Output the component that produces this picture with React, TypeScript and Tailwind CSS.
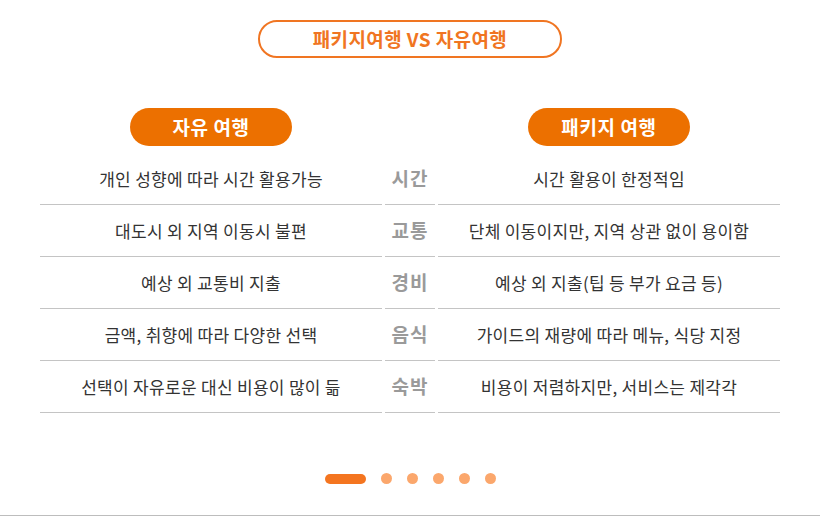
const rows = [
  { label: "시간", free: "개인 성향에 따라 시간 활용가능", pkg: "시간 활용이 한정적임" },
  { label: "교통", free: "대도시 외 지역 이동시 불편", pkg: "단체 이동이지만, 지역 상관 없이 용이함" },
  { label: "경비", free: "예상 외 교통비 지출", pkg: "예상 외 지출(팁 등 부가 요금 등)" },
  { label: "음식", free: "금액, 취향에 따라 다양한 선택", pkg: "가이드의 재량에 따라 메뉴, 식당 지정" },
  { label: "숙박", free: "선택이 자유로운 대신 비용이 많이 듦", pkg: "비용이 저렴하지만, 서비스는 제각각" },
];

export default function App() {
  return (
    <div
      className="w-[820px] h-[516px] bg-white flex flex-col items-center border-b border-[#bdbdbd]"
      style={{ fontFamily: '"Noto Sans CJK KR", "Noto Sans", sans-serif' }}
    >
      <div className="mt-[20px] w-[304px] h-[38px] rounded-full border-2 border-[#f07522] flex items-center justify-center text-[19px] font-semibold text-[#f07522] tracking-[0.4px]">
        패키지여행 VS 자유여행
      </div>

      <div className="mt-[50px] w-[740px]">
        <div className="grid grid-cols-[342px_50px_342px] gap-x-[3px]">
          <div className="flex justify-center">
            <div className="w-[162px] h-[38px] rounded-full bg-[#ec7000] text-white text-[19px] font-bold flex items-center justify-center tracking-[0.6px]">
              자유 여행
            </div>
          </div>
          <div />
          <div className="flex justify-center">
            <div className="w-[162px] h-[38px] rounded-full bg-[#ec7000] text-white text-[19px] font-bold flex items-center justify-center tracking-[0.6px]">
              패키지 여행
            </div>
          </div>
        </div>

        <div className="mt-[7px] grid grid-cols-[342px_50px_342px] gap-x-[3px]">
          {rows.map((r) => (
            <div key={r.label} className="contents">
              <div className="h-[52px] border-b border-[#c4c4c4] flex items-center justify-center text-[17px] text-[#333] tracking-[0.3px]">
                {r.free}
              </div>
              <div className="h-[52px] border-b border-[#c4c4c4] flex items-center justify-center text-[19px] font-semibold text-[#9a9a9a] tracking-[1px]">
                {r.label}
              </div>
              <div className="h-[52px] border-b border-[#c4c4c4] flex items-center justify-center text-[17px] text-[#333] tracking-[0.3px]">
                {r.pkg}
              </div>
            </div>
          ))}
        </div>
      </div>

      <div className="mt-[60px] flex items-center gap-[15px]">
        <div className="w-[41px] h-[10px] rounded-full bg-[#f47520]" />
        <div className="flex items-center gap-[15px]">
          {[0, 1, 2, 3, 4].map((i) => (
            <div key={i} className="w-[11px] h-[11px] rounded-full bg-[#fba76c]" />
          ))}
        </div>
      </div>
    </div>
  );
}
